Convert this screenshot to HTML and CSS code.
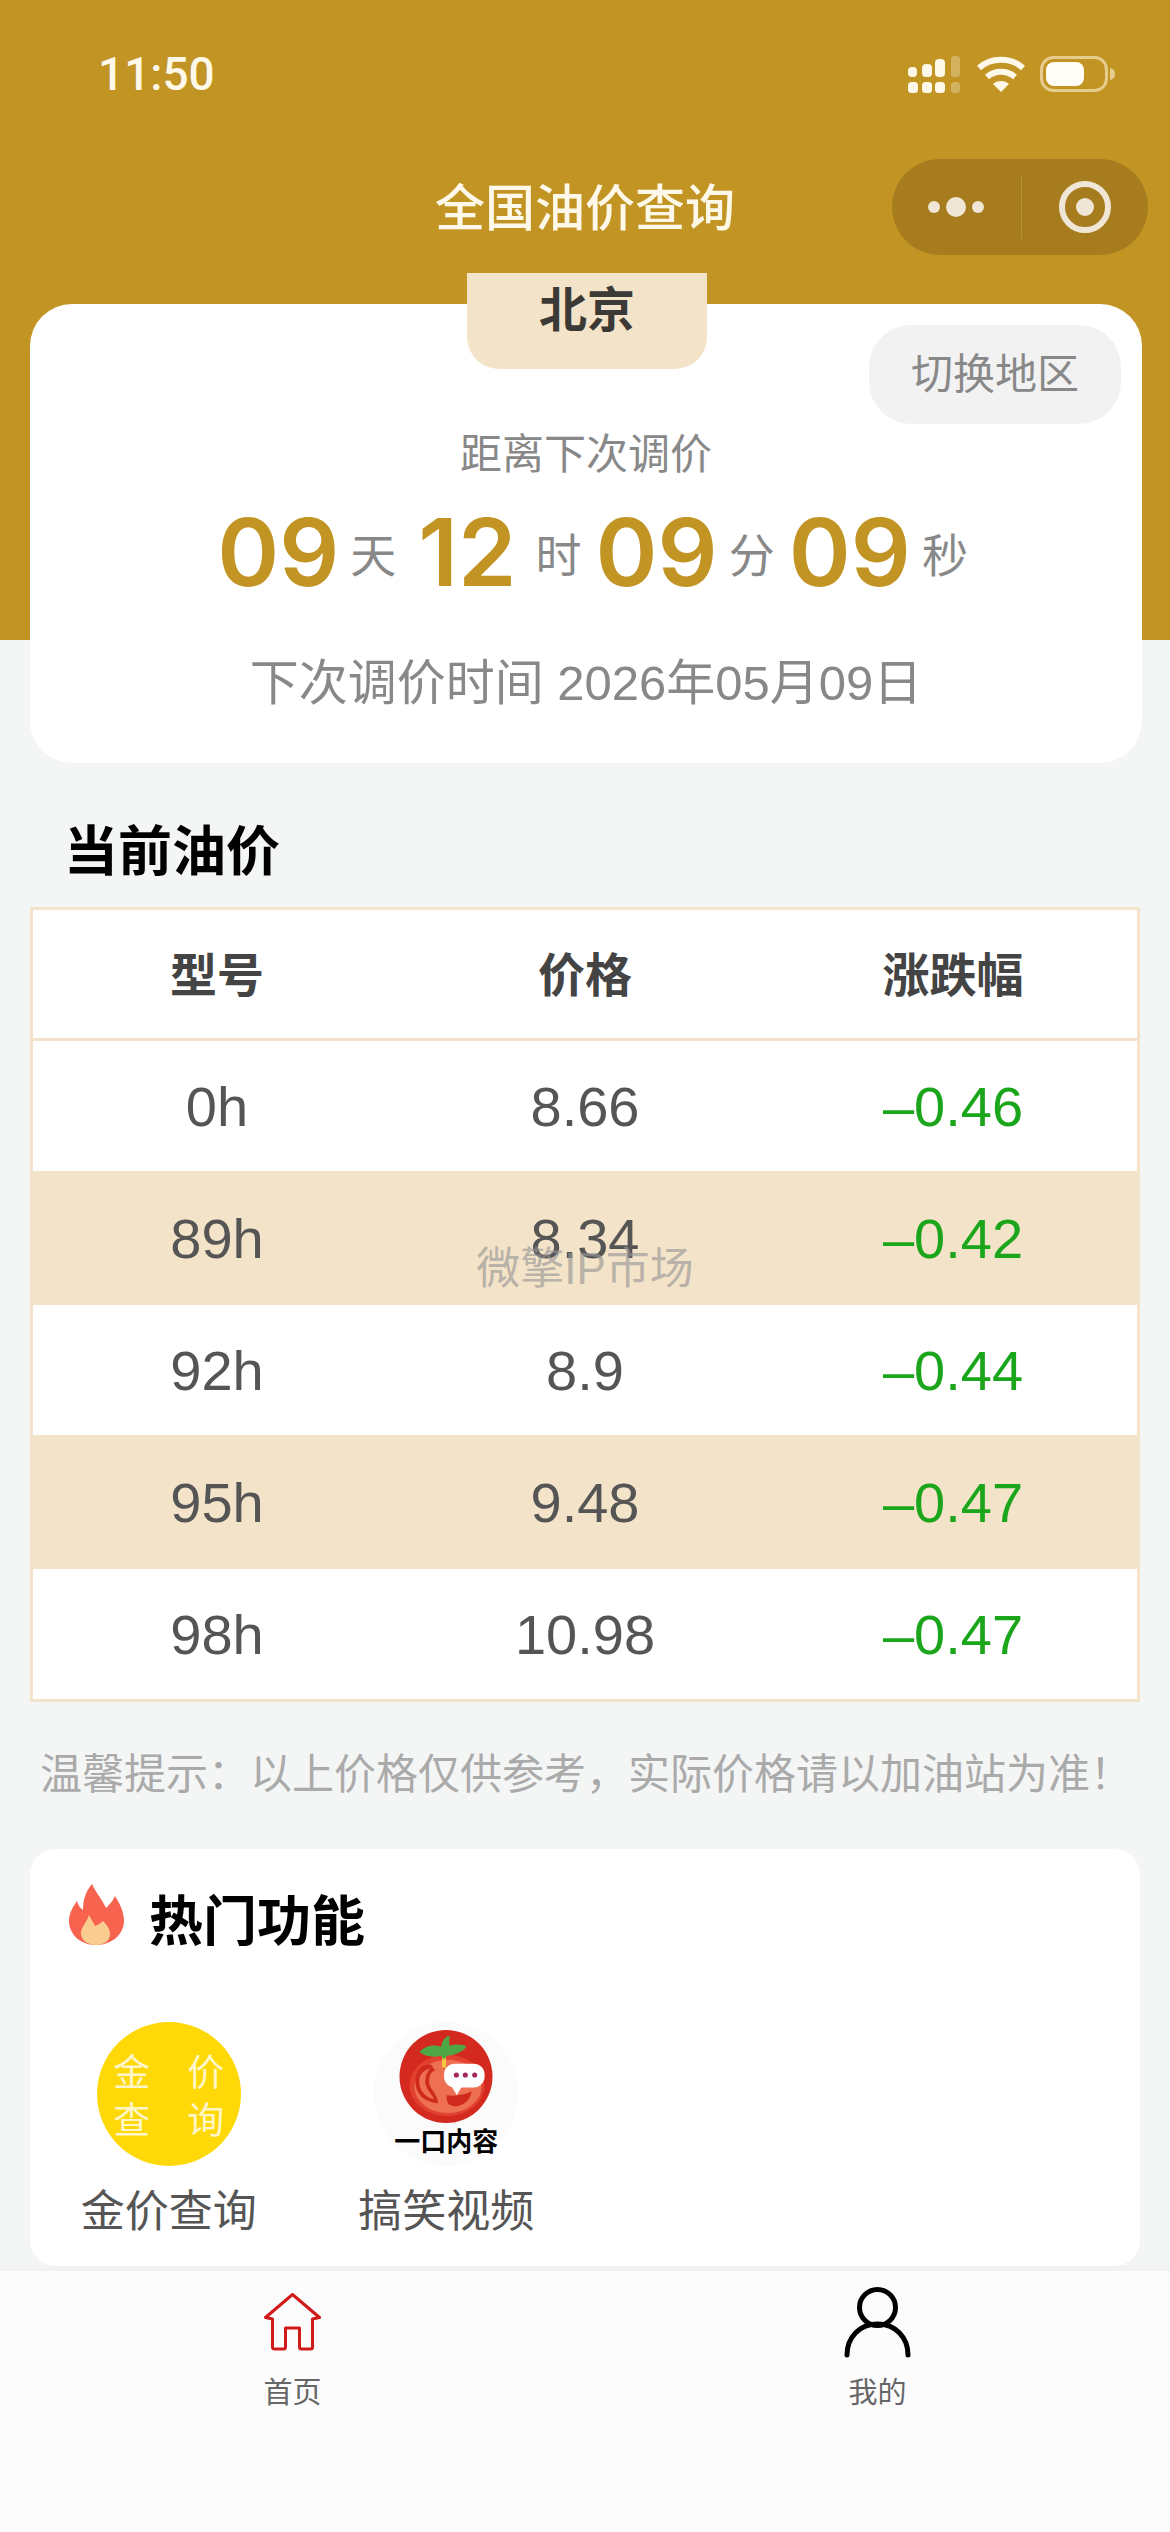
FILE: index.html
```html
<!DOCTYPE html>
<html lang="zh-CN">
<head>
  <meta charset="UTF-8" />
  <title>全国油价查询</title>
  <link rel="stylesheet" href="styles.css">
</head>
<body>
  <div class="page">
    <!-- Status bar -->
    <div class="status-bar">
      <span class="time">11:50</span>
      <div class="status-icons">
        <svg width="55" height="40" viewBox="0 0 55 40">
          <g fill="#fdf8e8">
            <rect x="1" y="13" width="9" height="10" rx="4"/>
            <rect x="15" y="10" width="10" height="13" rx="4"/>
            <rect x="28" y="5" width="10" height="18" rx="4"/>
            <rect x="1" y="28" width="10" height="11" rx="3.5"/>
            <rect x="15" y="28" width="10" height="11" rx="3.5"/>
            <rect x="28" y="28" width="10" height="11" rx="3.5"/>
          </g>
          <g fill="#fdf8e8" opacity="0.3">
            <rect x="44" y="2" width="9" height="21" rx="3"/>
            <rect x="44" y="28" width="9" height="11" rx="3.5"/>
          </g>
        </svg>
        <svg width="48" height="36" viewBox="0 0 48 36">
          <g fill="none" stroke="#fdf8e8" stroke-width="6">
            <path d="M2 12 C14 1 34 1 46 12"/>
            <path d="M10 21 C18 14 30 14 38 21"/>
          </g>
          <path d="M24 36 L16 28 C20 24 28 24 32 28 Z" fill="#fdf8e8"/>
        </svg>
        <svg width="76" height="36" viewBox="0 0 76 36">
          <rect x="1.5" y="1.5" width="65" height="33" rx="12" fill="none" stroke="#e6cd8e" stroke-width="3"/>
          <rect x="6" y="6" width="38" height="24" rx="8" fill="#fffdf6"/>
          <path d="M70 12 C74 13 75 15 75 18 C75 21 74 23 70 24 Z" fill="#e6cd8e"/>
        </svg>
      </div>
    </div>

    <!-- Nav -->
    <div class="nav-bar">
      <span></span>
      <h1 class="nav-title">全国油价查询</h1>
      <div class="capsule">
        <svg width="56" height="24" viewBox="0 0 56 24">
          <circle cx="6" cy="12" r="6" fill="#efe6d6"/>
          <circle cx="28" cy="12" r="10" fill="#efe6d6"/>
          <circle cx="50" cy="12" r="6" fill="#efe6d6"/>
        </svg>
        <span class="capsule-line"></span>
        <svg width="52" height="52" viewBox="0 0 52 52">
          <circle cx="26" cy="26" r="23" fill="none" stroke="#efe6d6" stroke-width="6"/>
          <circle cx="26" cy="26" r="9" fill="#efe6d6"/>
        </svg>
      </div>
    </div>

    <div class="content">
      <!-- Countdown card -->
      <div class="count-card">
        <div class="city-tag">北京</div>
        <div class="switch-btn">切换地区</div>
        <p class="count-label">距离下次调价</p>
        <div class="count-row">
          <span class="num">09</span><span class="unit">天</span>
          <span class="num num-hours">12</span><span class="unit">时</span>
          <span class="num">09</span><span class="unit">分</span>
          <span class="num">09</span><span class="unit">秒</span>
        </div>
        <p class="next-date">下次调价时间 2026年05月09日</p>
      </div>

      <h2 class="section-title">当前油价</h2>

      <!-- Price table -->
      <div class="price-table">
        <div class="row head"><span>型号</span><span>价格</span><span>涨跌幅</span></div>
        <div class="row"><span>0h</span><span>8.66</span><span class="down">–0.46</span></div>
        <div class="row stripe"><span>89h</span><span>8.34</span><span class="down">–0.42</span></div>
        <div class="row"><span>92h</span><span>8.9</span><span class="down">–0.44</span></div>
        <div class="row stripe"><span>95h</span><span>9.48</span><span class="down">–0.47</span></div>
        <div class="row"><span>98h</span><span>10.98</span><span class="down">–0.47</span></div>
        <div class="watermark">微擎IP市场</div>
      </div>

      <p class="tip">温馨提示：以上价格仅供参考，实际价格请以加油站为准！</p>

      <!-- Hot features -->
      <div class="hot-card">
        <div class="hot-head">
          <svg class="fire" width="55" height="61" viewBox="0 0 55 61">
            <path d="M27 61 C11 61 0 50 0 37 C0 29 4 23 8 17 C9 21 11 24 14 26 C14 15 17 7 23 0 C27 9 33 15 37 24 C40 21 44 17 46 12 C51 20 55 28 55 37 C55 50 43 61 27 61 Z" fill="#f8634f"/>
            <path d="M27 61 C18 61 12 56 12 49 C12 43 18 38 20 31 C22 35 24 38 26 42 C29 41 32 39 34 37 C38 41 41 45 41 50 C41 57 35 61 27 61 Z" fill="#f9cd8f"/>
          </svg>
          <h2 class="hot-title">热门功能</h2>
        </div>
        <div class="hot-grid">
          <div class="hot-item">
            <div class="gold-icon"><span>金</span><span>价</span><span>查</span><span>询</span></div>
            <span class="hot-label">金价查询</span>
          </div>
          <div class="hot-item">
            <div class="tomato-icon">
              <svg width="94" height="93" viewBox="0 0 94 94">
                <circle cx="47" cy="47" r="47" fill="#d3291f"/>
                <ellipse cx="48" cy="56" rx="38" ry="31" fill="#e2412f"/>
                <ellipse cx="49" cy="57" rx="34" ry="27" fill="#ee7052"/>
                <path d="M32 35 C22 34 16 42 16 52 C16 64 24 73 39 74 C39 65 30 60 30 52 C30 46 32 42 36 41 Z" fill="#cf2a1d"/>
                <path d="M31 39 C25 40 20 45 20 52 C20 61 26 68 35 70 C33 64 26 60 26 52 C26 47 28 42 31 39 Z" fill="#ee7052"/>
                <path d="M48 66 C46 74 52 78 58 77 C66 76 72 70 73 62 C66 66 56 67 48 66 Z" fill="#cf2a1d"/>
                <rect x="43" y="26" width="4" height="12" fill="#f5c842"/>
                <path d="M20 22 C28 14 38 15 42 17 C43 11 46 6 51 6 C50 11 50 14 51 16 C57 14 64 14 68 17 C62 24 53 26 48 26 L45 30 L42 26 C34 28 26 27 20 22 Z" fill="#4ea644"/>
                <path d="M52 56 L58 66 L63 57 Z" fill="#fff"/>
                <rect x="45" y="34" width="41" height="24" rx="11" fill="#fff"/>
                <g fill="#a3285a">
                  <circle cx="57.5" cy="45.5" r="2.6"/>
                  <circle cx="66.5" cy="45.5" r="2.6"/>
                  <circle cx="76" cy="45.5" r="2.6"/>
                </g>
              </svg>
              <span class="tomato-text">一口内容</span>
            </div>
            <span class="hot-label">搞笑视频</span>
          </div>
        </div>
      </div>
    </div>

    <!-- Tab bar -->
    <div class="tab-bar">
      <div class="tab">
        <div class="tab-icon">
          <svg width="57" height="58" viewBox="0 0 57 58">
            <path d="M28.5 1.5 L1.5 24.5 L8.5 26 L8.5 54 Q8.5 56 10.5 56 L19.5 56 Q21.5 56 21.5 54 L21.5 35 L35.5 35 L35.5 54 Q35.5 56 37.5 56 L46.5 56 Q48.5 56 48.5 54 L48.5 26 L55.5 24.5 Z" fill="none" stroke="#d01a1a" stroke-width="3" stroke-linejoin="round"/>
          </svg>
        </div>
        <span>首页</span>
      </div>
      <div class="tab">
        <div class="tab-icon">
          <svg width="67" height="71" viewBox="0 0 67 71">
            <g fill="none" stroke="#000" stroke-width="5" stroke-linecap="round">
              <ellipse cx="33.5" cy="20.5" rx="18" ry="18"/>
              <path d="M3 68 C3 50 16 37 33.5 37 C51 37 64 50 64 68"/>
            </g>
          </svg>
        </div>
        <span>我的</span>
      </div>
    </div>
  </div>
</body>
</html>
```

FILE: styles.css
```css
html, body {
  margin: 0;
  padding: 0;
}
body {
  font-family: "Liberation Sans", "Noto Sans CJK SC", sans-serif;
  color: #555;
}
h1, h2, p {
  margin: 0;
}

.page {
  width: 1170px;
  height: 2532px;
  overflow: hidden;
  background: linear-gradient(#c29423 640px, #f4f5f5 640px);
}

/* Status bar */
.status-bar {
  height: 148px;
  display: flex;
  justify-content: space-between;
  align-items: center;
  padding: 0 54px 0 98px;
  box-sizing: border-box;
}
.time {
  font-family: Roboto, sans-serif;
  font-size: 46px;
  color: #fdf8e8;
  font-weight: 500;
}
.status-icons {
  display: flex;
  align-items: center;
  gap: 15px;
}

/* Nav */
.nav-bar {
  height: 118px;
  display: grid;
  grid-template-columns: 1fr auto 1fr;
  align-items: center;
}
.nav-title {
  font-size: 50px;
  font-weight: 500;
  color: #fdf8e8;
  line-height: 70px;
  padding-top: 3px;
}
.capsule {
  justify-self: end;
  width: 256px;
  height: 96px;
  margin-right: 22px;
  border-radius: 48px;
  background: #a67c1e;
  display: flex;
  align-items: center;
  box-sizing: border-box;
  padding-left: 36px;
}
.capsule-line {
  width: 1px;
  height: 63px;
  margin: 0 37px;
  background: rgba(255, 255, 255, 0.15);
}

/* Content */
.content {
  padding: 0 28px 0 30px;
}

.count-card {
  position: relative;
  margin-top: 38px;
  height: 459px;
  box-sizing: border-box;
  padding-top: 121px;
  background: #fff;
  border-radius: 42px;
  text-align: center;
}
.city-tag {
  position: absolute;
  top: -31px;
  left: 437px;
  width: 240px;
  height: 96px;
  line-height: 76px;
  background: #f3e4c9;
  border-radius: 0 0 32px 32px;
  font-size: 48px;
  font-weight: 700;
  color: #3c3a36;
}
.switch-btn {
  position: absolute;
  top: 21px;
  right: 21px;
  width: 252px;
  height: 99px;
  line-height: 99px;
  background: #f2f2f2;
  border-radius: 42px;
  font-size: 42px;
  color: #888;
}
.count-label {
  font-size: 42px;
  line-height: 60px;
  color: #888;
}
.count-row {
  display: flex;
  justify-content: center;
  align-items: center;
  height: 110px;
  margin-top: 12px;
  padding-left: 27px;
}
.num {
  font-family: Inter, "Liberation Sans", sans-serif;
  font-size: 94px;
  font-weight: 600;
  color: #c29423;
}
.num-hours {
  margin: 0 8px;
}
.unit {
  font-size: 46px;
  color: #888;
  margin: 0 14px 0 11px;
}
.next-date {
  margin-top: 46px;
  font-size: 49px;
  line-height: 60px;
  color: #888;
}

.section-title {
  margin: 54px 0 20px 34px;
  font-size: 54px;
  line-height: 70px;
  font-weight: 700;
  color: #000;
}

/* Table */
.price-table {
  position: relative;
  border: 3px solid #f3e4c9;
  background: #fff;
  margin-right: 2px;
}
.row {
  display: grid;
  grid-template-columns: repeat(3, 1fr);
  align-items: center;
  height: 130px;
  text-align: center;
  font-size: 56px;
  color: #555;
}
.row.head {
  height: 131px;
  box-sizing: border-box;
  padding-bottom: 6px;
  border-bottom: 3px solid #f3e4c9;
  font-size: 47px;
  font-weight: 700;
  color: #444;
}
.row.stripe {
  height: 134px;
  background: #f3e3c8;
}
.down {
  color: #1aa51a;
}
.watermark {
  position: absolute;
  top: 329px;
  left: 0;
  right: 0;
  text-align: center;
  font-size: 44px;
  line-height: 60px;
  color: rgba(150, 150, 150, 0.65);
}

.tip {
  margin: 43px 0 44px 10px;
  font-size: 42px;
  line-height: 60px;
  color: #aaa;
  white-space: nowrap;
}

/* Hot features */
.hot-card {
  height: 417px;
  box-sizing: border-box;
  padding-top: 35px;
  margin-right: 2px;
  background: #fff;
  border-radius: 26px;
}
.hot-head {
  display: flex;
  align-items: flex-start;
  gap: 25px;
  padding-left: 39px;
  height: 70px;
}
.hot-title {
  font-size: 54px;
  line-height: 76px;
  font-weight: 700;
  color: #000;
}
.hot-grid {
  display: grid;
  grid-template-columns: repeat(4, 1fr);
  margin-top: 68px;
}
.hot-item {
  display: flex;
  flex-direction: column;
  align-items: center;
}
.hot-label {
  margin-top: 16px;
  font-size: 44px;
  line-height: 60px;
  color: #555;
}
.gold-icon {
  width: 144px;
  height: 144px;
  box-sizing: border-box;
  padding-top: 7px;
  border-radius: 50%;
  background: #ffd907;
  display: grid;
  grid-template-columns: 37px 37px;
  column-gap: 37px;
  align-content: center;
  justify-content: center;
  font-size: 37px;
  line-height: 48px;
  color: #fff6c8;
  text-align: center;
}
.tomato-icon {
  width: 144px;
  height: 144px;
  border-radius: 50%;
  background: #fbfbfb;
  display: flex;
  flex-direction: column;
  align-items: center;
  box-sizing: border-box;
  padding-top: 8px;
}
.tomato-icon svg {
  flex: none;
}
.tomato-text {
  font-size: 26px;
  line-height: 30px;
  font-weight: 700;
  color: #000;
  margin-top: 4px;
  white-space: nowrap;
}

/* Tab bar */
.tab-bar {
  height: 266px;
  box-sizing: border-box;
  border-top: 5px solid #f2f2f2;
  background: #fcfcfc;
  display: grid;
  grid-template-columns: 1fr 1fr;
  padding-top: 13px;
}
.tab {
  display: flex;
  flex-direction: column;
  align-items: center;
  font-size: 29px;
  line-height: 40px;
  color: #666;
}
.tab-icon {
  height: 76px;
  display: flex;
  align-items: center;
  margin-bottom: 13px;
}
```
